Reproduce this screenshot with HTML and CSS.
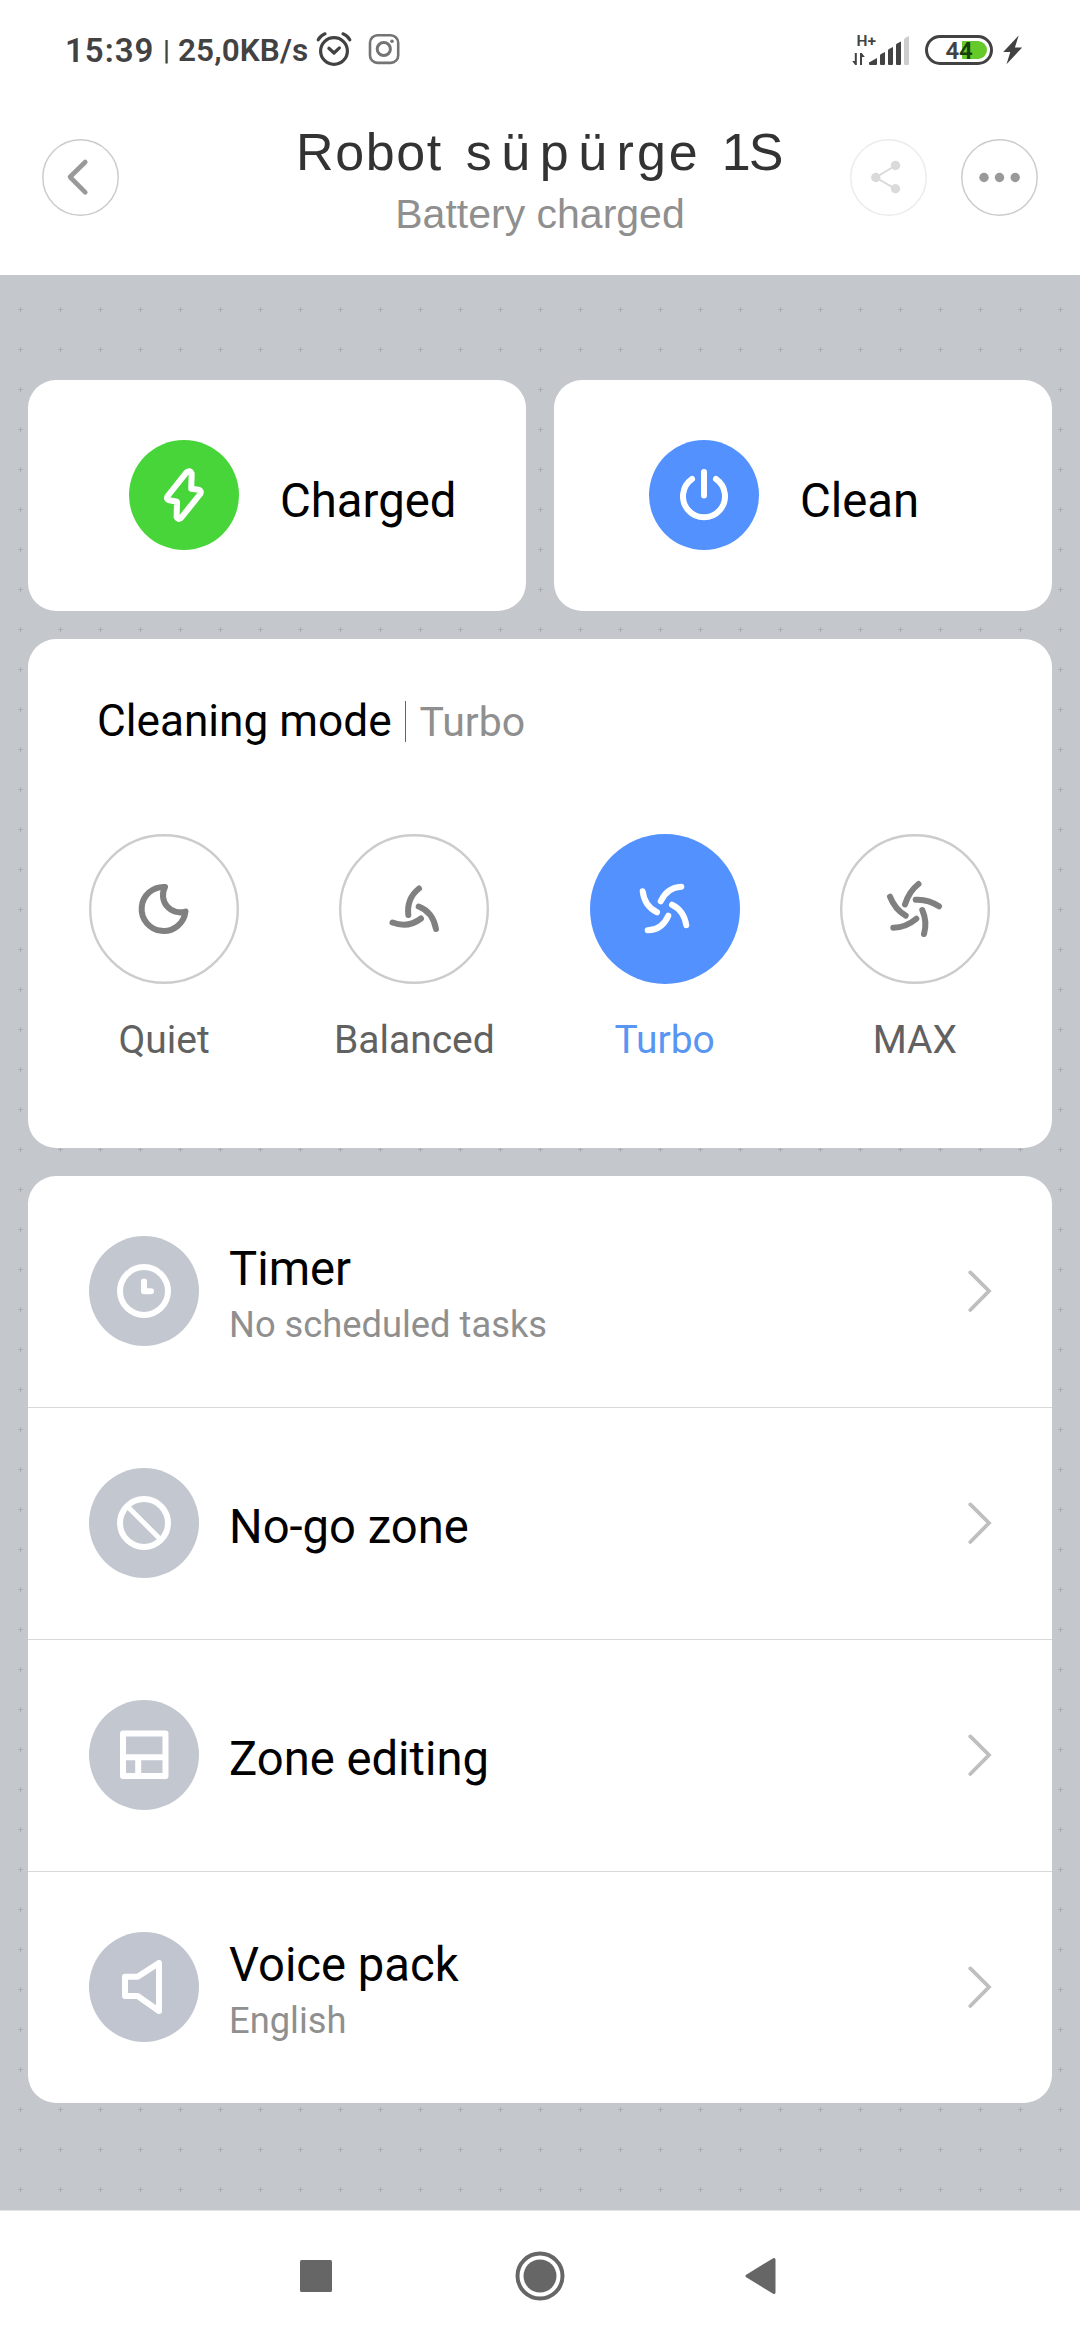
FILE: index.html
```html
<!DOCTYPE html>
<html lang="en">
<head>
<meta charset="utf-8">
<title>Robot süpürge 1S</title>
<link rel="stylesheet" href="styles.css">
</head>
<body>
<div class="screen">
  <div class="status">
    <span class="status-time">15:39</span>
    <span class="status-sep">|</span>
    <span class="status-speed">25,0KB/s</span>
    <svg class="status-alarm" width="36" height="40" viewBox="316 30 36 40" fill="none" stroke="#424242" stroke-width="3.2" stroke-linecap="round" stroke-linejoin="round">
      <circle cx="334" cy="52" r="13.4"/>
      <path d="M328.9 49.3 334 54l5.4-5.1"/>
      <path d="M318.2 40.8Q320.5 36.5 325 34.8M349.8 40.8Q347.5 36.5 343 34.8"/>
    </svg>
    <svg class="status-insta" width="32" height="32" viewBox="368 33 32 32" fill="none" stroke="#747474" stroke-width="2.6">
      <rect x="370" y="35.3" width="28.2" height="27.6" rx="7.5"/>
      <circle cx="383.8" cy="49" r="6.6" stroke-width="3"/>
      <circle cx="392" cy="41.2" r="1.8" fill="#747474" stroke="none"/>
    </svg>
    <span class="status-fill"></span>
    <svg width="60" height="36" viewBox="850 30 60 36" fill="#424242">
      <text class="net-type" x="856.6" y="44">H+</text>
      <path d="M854.8 51h2v12h-1.6l-3-4h2.6zM860 63h2v-8h2.8l-3-4H860z"/>
      <path d="M869 60.5 877 56v6q0 1-1 1h-6q-1 0-1-1zM880 53.5q0-1 1-1.6l4-2v12q0 1-1 1h-3q-1 0-1-1zM888 48.5q0-1 1-1.6l4-2v17q0 1-1 1h-3q-1 0-1-1zM896 43q0-1 1-1.6l4-2v22.5q0 1-1 1h-3q-1 0-1-1z"/>
      <path fill="#cdcdcd" d="M904 37.5q0-1 1-1.6l4-2v28q0 1-1 1h-3q-1 0-1-1z"/>
    </svg>
    <svg class="status-battery" width="68" height="30" viewBox="925 34 68 30">
      <path fill="#65c92a" d="M962 41q0-1 1-1h15a9 9 0 0 1 0 18h-15q-1 0-1-1z"/>
      <rect x="926.5" y="35.5" width="65" height="27" rx="13.5" fill="none" stroke="#424242" stroke-width="3"/>
      <text class="battery-level" x="945.4" y="58">4<tspan fill="#173f0b">4</tspan></text>
    </svg>
    <svg class="status-bolt" width="20" height="30" viewBox="1003 34 20 30" fill="#424242">
      <path d="M1018.7 34.4 1003.2 51h7.1l-3.8 12.2 15.7-16.7h-7.3z"/>
    </svg>
  </div>

  <header class="header">
    <div class="header-side">
      <svg width="77" height="77" viewBox="0 0 77 77" fill="none">
        <circle cx="38.5" cy="38.5" r="37.7" stroke="#ccc" stroke-width="1.5"/>
        <path d="M43.3 23 28 38l15.300 15.300" stroke="#999" stroke-width="4.600" stroke-linecap="round" stroke-linejoin="round"/>
      </svg>
    </div>
    <div class="header-text">
      <h1 class="title">Robot <span class="title-wide">süpü</span><span class="title-mid">rge</span> <span class="title-model">1S</span></h1>
      <p class="subtitle">Battery charged</p>
    </div>
    <div class="header-side header-side--end">
      <svg width="77" height="77" viewBox="0 0 77 77" fill="#dadada">
        <circle cx="38.5" cy="38.5" r="37.7" fill="none" stroke="#ececec" stroke-width="1.5"/>
        <path d="M45.5 26.5 25.8 38.5l19.700 11.300" fill="none" stroke="#dadada" stroke-width="2"/>
        <circle cx="45.5" cy="26.5" r="4.7"/><circle cx="25.8" cy="38.5" r="4.7"/><circle cx="45.5" cy="49.8" r="4.7"/>
      </svg>
      <svg width="77" height="77" viewBox="0 0 77 77" fill="#999">
        <circle cx="38.5" cy="38.5" r="37.7" fill="none" stroke="#ccc" stroke-width="1.5"/>
        <circle cx="23" cy="38.5" r="4.7"/><circle cx="38.5" cy="38.5" r="4.7"/><circle cx="54.2" cy="38.5" r="4.7"/>
      </svg>
    </div>
  </header>

  <main class="main">
    <div class="actions">
      <div class="card action">
        <svg width="110" height="110" viewBox="0 0 110 110" fill="none" stroke="#fff" stroke-width="6" stroke-linecap="round" stroke-linejoin="round">
          <circle cx="55" cy="55" r="55" fill="#48d53a" stroke="none"/>
          <path d="M57.5 32.3 38.7 56Q36.8 59.3 40.5 60.3L48 61.8 47.6 77Q48.6 80.3 52 78L71.2 54Q73 50.7 69.5 49.7L62.2 48.8 62.7 33.5Q61.2 29.5 57.5 32.3Z"/>
        </svg>
        <span class="action-label">Charged</span>
      </div>
      <div class="card action action--clean">
        <svg width="110" height="110" viewBox="0 0 110 110" fill="none" stroke="#fff" stroke-width="6" stroke-linecap="round">
          <circle cx="55" cy="55" r="55" fill="#5391ff" stroke="none"/>
          <path d="M55 32v23.5M43 39a21 21 0 1 0 24 0"/>
        </svg>
        <span class="action-label">Clean</span>
      </div>
    </div>

    <section class="card modes">
      <div class="modes-head">
        <h2 class="modes-title">Cleaning mode</h2>
        <span class="modes-rule"></span>
        <span class="modes-current">Turbo</span>
      </div>
      <div class="modes-row">
        <div class="mode">
          <svg class="mode-icon" viewBox="0 0 150 150">
            <circle class="mode-ring" cx="75" cy="75" r="73.8"/>
            <path d="M76 53A22 22 0 1 0 96.5 77.5A17.2 17.2 0 0 1 76 53Z"/>
          </svg>
          <span class="mode-label">Quiet</span>
        </div>
        <div class="mode">
          <svg class="mode-icon" viewBox="0 0 150 150">
            <circle class="mode-ring" cx="75" cy="75" r="73.8"/>
            <path d="M80 54.5Q67.5 64.5 69.3 81M79.7 72.5Q94 78 97 95M82 84.5Q69 94.5 53.5 88.5"/>
          </svg>
          <span class="mode-label">Balanced</span>
        </div>
        <div class="mode mode--active">
          <svg class="mode-icon" viewBox="0 0 150 150">
            <circle class="mode-ring" cx="75" cy="75" r="75"/>
            <path d="M91.3 52.7Q77 53.5 70.7 67.3M82 70.7Q94 76.5 96.3 91.3M78.3 81.7Q72 96 57.7 96.3M67 78.3Q54.5 72 52.7 57.3"/>
          </svg>
          <span class="mode-label">Turbo</span>
        </div>
        <div class="mode">
          <svg class="mode-icon" viewBox="0 0 150 150">
            <circle class="mode-ring" cx="75" cy="75" r="73.8"/>
            <path d="M78.5 50Q69 57.5 65 70.3M75.7 65.7Q88 65 99 72.3M82.3 76Q87.5 88 84 100M76.3 84.7Q66 93.5 53.3 93.7M65.7 81.7Q55 75.5 50 62.7"/>
          </svg>
          <span class="mode-label">MAX</span>
        </div>
      </div>
    </section>

    <section class="card list">
      <div class="row">
        <svg class="row-icon" viewBox="0 0 110 110">
          <circle class="row-disc" cx="55" cy="55" r="55"/>
          <circle cx="55" cy="55" r="24"/>
          <path d="M55 45.5v9.7h7"/>
        </svg>
        <div class="row-text"><span class="row-title">Timer</span><span class="row-sub">No scheduled tasks</span></div>
        <svg class="row-chevron" viewBox="0 0 24 42"><path d="M2.3 2.4 21 21 2.3 40"/></svg>
      </div>
      <div class="row">
        <svg class="row-icon" viewBox="0 0 110 110">
          <circle class="row-disc" cx="55" cy="55" r="55"/>
          <circle cx="55" cy="55" r="24"/>
          <path d="M38.5 38.5l33 33" stroke-width="5"/>
        </svg>
        <div class="row-text"><span class="row-title">No-go zone</span></div>
        <svg class="row-chevron" viewBox="0 0 24 42"><path d="M2.3 2.4 21 21 2.3 40"/></svg>
      </div>
      <div class="row">
        <svg class="row-icon" viewBox="0 0 110 110">
          <circle class="row-disc" cx="55" cy="55" r="55"/>
          <path d="M34 33.5h42.5v42.5H34zM34 57.2h42.5M49.2 57.2V76"/>
        </svg>
        <div class="row-text"><span class="row-title">Zone editing</span></div>
        <svg class="row-chevron" viewBox="0 0 24 42"><path d="M2.3 2.4 21 21 2.3 40"/></svg>
      </div>
      <div class="row">
        <svg class="row-icon" viewBox="0 0 110 110">
          <circle class="row-disc row-disc--voice" cx="55" cy="55" r="55"/>
          <path d="M36 44.8h12.6L70 31v48L48.6 64H36z"/>
        </svg>
        <div class="row-text"><span class="row-title">Voice pack</span><span class="row-sub">English</span></div>
        <svg class="row-chevron" viewBox="0 0 24 42"><path d="M2.3 2.4 21 21 2.3 40"/></svg>
      </div>
    </section>
  </main>

  <nav class="nav">
    <svg width="32" height="32" viewBox="0 0 32 32"><rect width="32" height="32" rx="1.5" fill="#666"/></svg>
    <svg class="nav-home" width="50" height="50" viewBox="0 0 50 50"><circle cx="25" cy="25" r="22.5" fill="none" stroke="#666" stroke-width="4"/><circle cx="25" cy="25" r="16.5" fill="#666"/></svg>
    <svg class="nav-back" width="32" height="38" viewBox="0 0 32 38"><path d="M2 19 29 2.500v33z" fill="#666" stroke="#666" stroke-width="3" stroke-linejoin="round"/></svg>
  </nav>
</div>
</body>
</html>
```
FILE: styles.css
```css
* {
  box-sizing: border-box;
}

body {
  margin: 0;
  background: #fff;
  font-family: Roboto, "Noto Sans", sans-serif;
}

h1, h2, p {
  margin: 0;
  font-weight: 400;
}

svg {
  display: block;
  flex: none;
}

.screen {
  display: flex;
  flex-direction: column;
  width: 1080px;
  height: 2340px;
  overflow: hidden;
  background: #fff;
}

/* Status bar */
.status {
  display: flex;
  align-items: center;
  height: 100px;
  padding: 0 57px 0 65px;
  color: #424242;
  font-weight: 600;
  white-space: nowrap;
}

.status-time {
  width: 95px;
  font-size: 33px;
  letter-spacing: 1px;
}

.status-sep {
  width: 18px;
  font-size: 28px;
  font-weight: 500;
  text-indent: 3px;
}

.status-speed {
  width: 138px;
  padding-top: 1px;
  font-size: 31.5px;
  letter-spacing: 0.1px;
}

.status-insta {
  margin-left: 16px;
}

.status-alarm,
.status-insta {
  position: relative;
  top: -1px;
}

.status-fill {
  flex: 1;
}

.status-battery {
  margin: 0 10px 0 15px;
}

.net-type {
  font-size: 15.5px;
  font-weight: 600;
}

.battery-level {
  font-size: 24px;
  font-weight: 600;
  fill: #424242;
}

/* Header */
.header {
  display: grid;
  grid-template-columns: 1fr 490px 1fr;
  align-items: center;
  height: 175px;
  padding: 0 42px 20px;
  font-family: "Liberation Sans", Arial, sans-serif;
}

.header-side {
  display: flex;
  gap: 34px;
}

.header-side--end {
  justify-content: flex-end;
}

.header-text {
  display: flex;
  flex-direction: column;
  gap: 7px;
  padding-top: 5px;
  white-space: nowrap;
}

.title {
  padding-left: 1px;
  font-size: 52px;
  line-height: 60px;
  letter-spacing: 1.6px;
  color: #333;
}

.title-wide {
  margin-left: 7px;
  letter-spacing: 9.5px;
}

.title-mid {
  letter-spacing: 3px;
}

.title-model {
  margin-left: 5px;
  letter-spacing: -2px;
}

.subtitle {
  font-size: 41px;
  line-height: 50px;
  text-align: center;
  color: #8f8f8f;
}

/* Content over the cross-marked map background */
.main {
  display: flex;
  flex-direction: column;
  gap: 28px;
  height: 1935px;
  padding: 105px 28px 0;
  background: #c4c7cc url("data:image/svg+xml,%3Csvg xmlns='http://www.w3.org/2000/svg' width='40' height='40'%3E%3Cpath d='M18 34h5v1h-5zM20 32h1v5h-1z' fill='%23abaeb2'/%3E%3C/svg%3E");
}

.card {
  background: #fff;
  border-radius: 28px;
}

.actions {
  display: grid;
  grid-template-columns: 1fr 1fr;
  gap: 28px;
}

.action {
  display: flex;
  align-items: center;
  gap: 41px;
  height: 231px;
  padding: 0 0 1px 101px;
}

.action--clean {
  padding-left: 95px;
}

.action-label {
  padding-top: 12px;
  font-size: 47.3px;
  line-height: 54px;
  color: #000;
}

/* Cleaning modes */
.modes {
  height: 509px;
  padding: 57px 12px 0 11px;
}

.modes-head {
  display: flex;
  align-items: baseline;
  height: 50px;
  padding-left: 58px;
}

.modes-title {
  font-size: 44.2px;
  line-height: 50px;
  color: #000;
}

.modes-rule {
  align-self: center;
  width: 1px;
  height: 41px;
  margin: 0 14px 0 13px;
  background: #666;
}

.modes-current {
  font-size: 41px;
  line-height: 50px;
  color: #8f8f8f;
}

.modes-row {
  display: grid;
  grid-template-columns: repeat(4, 1fr);
  margin-top: 88px;
}

.mode {
  display: flex;
  flex-direction: column;
  align-items: center;
  gap: 33px;
}

.mode-icon {
  width: 150px;
  height: 150px;
  fill: none;
  stroke: #808080;
  stroke-width: 6px;
  stroke-linecap: round;
  stroke-linejoin: round;
}

.mode-ring {
  stroke: #ccc;
  stroke-width: 2.4px;
}

.mode-label {
  font-size: 39px;
  line-height: 46px;
  color: #616161;
}

.mode--active .mode-icon {
  stroke: #fff;
}

.mode--active .mode-ring {
  fill: #5391ff;
  stroke: none;
}

.mode--active .mode-label {
  color: #5896f2;
}

/* Settings list */
.row {
  display: flex;
  align-items: center;
  height: 232px;
  padding: 0 60px 1px 61px;
  border-bottom: 1px solid #d6d8da;
}

.row:last-child {
  height: 231px;
  border-bottom: 0;
}

.row-icon {
  width: 110px;
  height: 110px;
  fill: none;
  stroke: #fff;
  stroke-width: 6px;
  stroke-linejoin: round;
  stroke-linecap: round;
}

.row-disc {
  fill: #c3c7d0;
  stroke: none;
}

.row-disc--voice {
  fill: #c0c5d0;
}

.row-text {
  display: flex;
  flex: 1;
  flex-direction: column;
  gap: 7px;
  padding: 7px 0 0 30px;
}

.row-title {
  font-size: 47.2px;
  line-height: 54px;
  color: #000;
}

.row-sub {
  font-size: 36.3px;
  line-height: 44px;
  color: #8f8f8f;
}

.row-chevron {
  width: 24px;
  height: 42px;
  fill: none;
  stroke: #bfbfbf;
  stroke-width: 3.8px;
  stroke-linecap: round;
}

/* System navigation */
.nav {
  display: flex;
  align-items: center;
  height: 130px;
  padding-left: 300px;
  border-top: 1px solid #e4e4e6;
}

.nav-home {
  margin: 0 180px 0 183px;
}
```
